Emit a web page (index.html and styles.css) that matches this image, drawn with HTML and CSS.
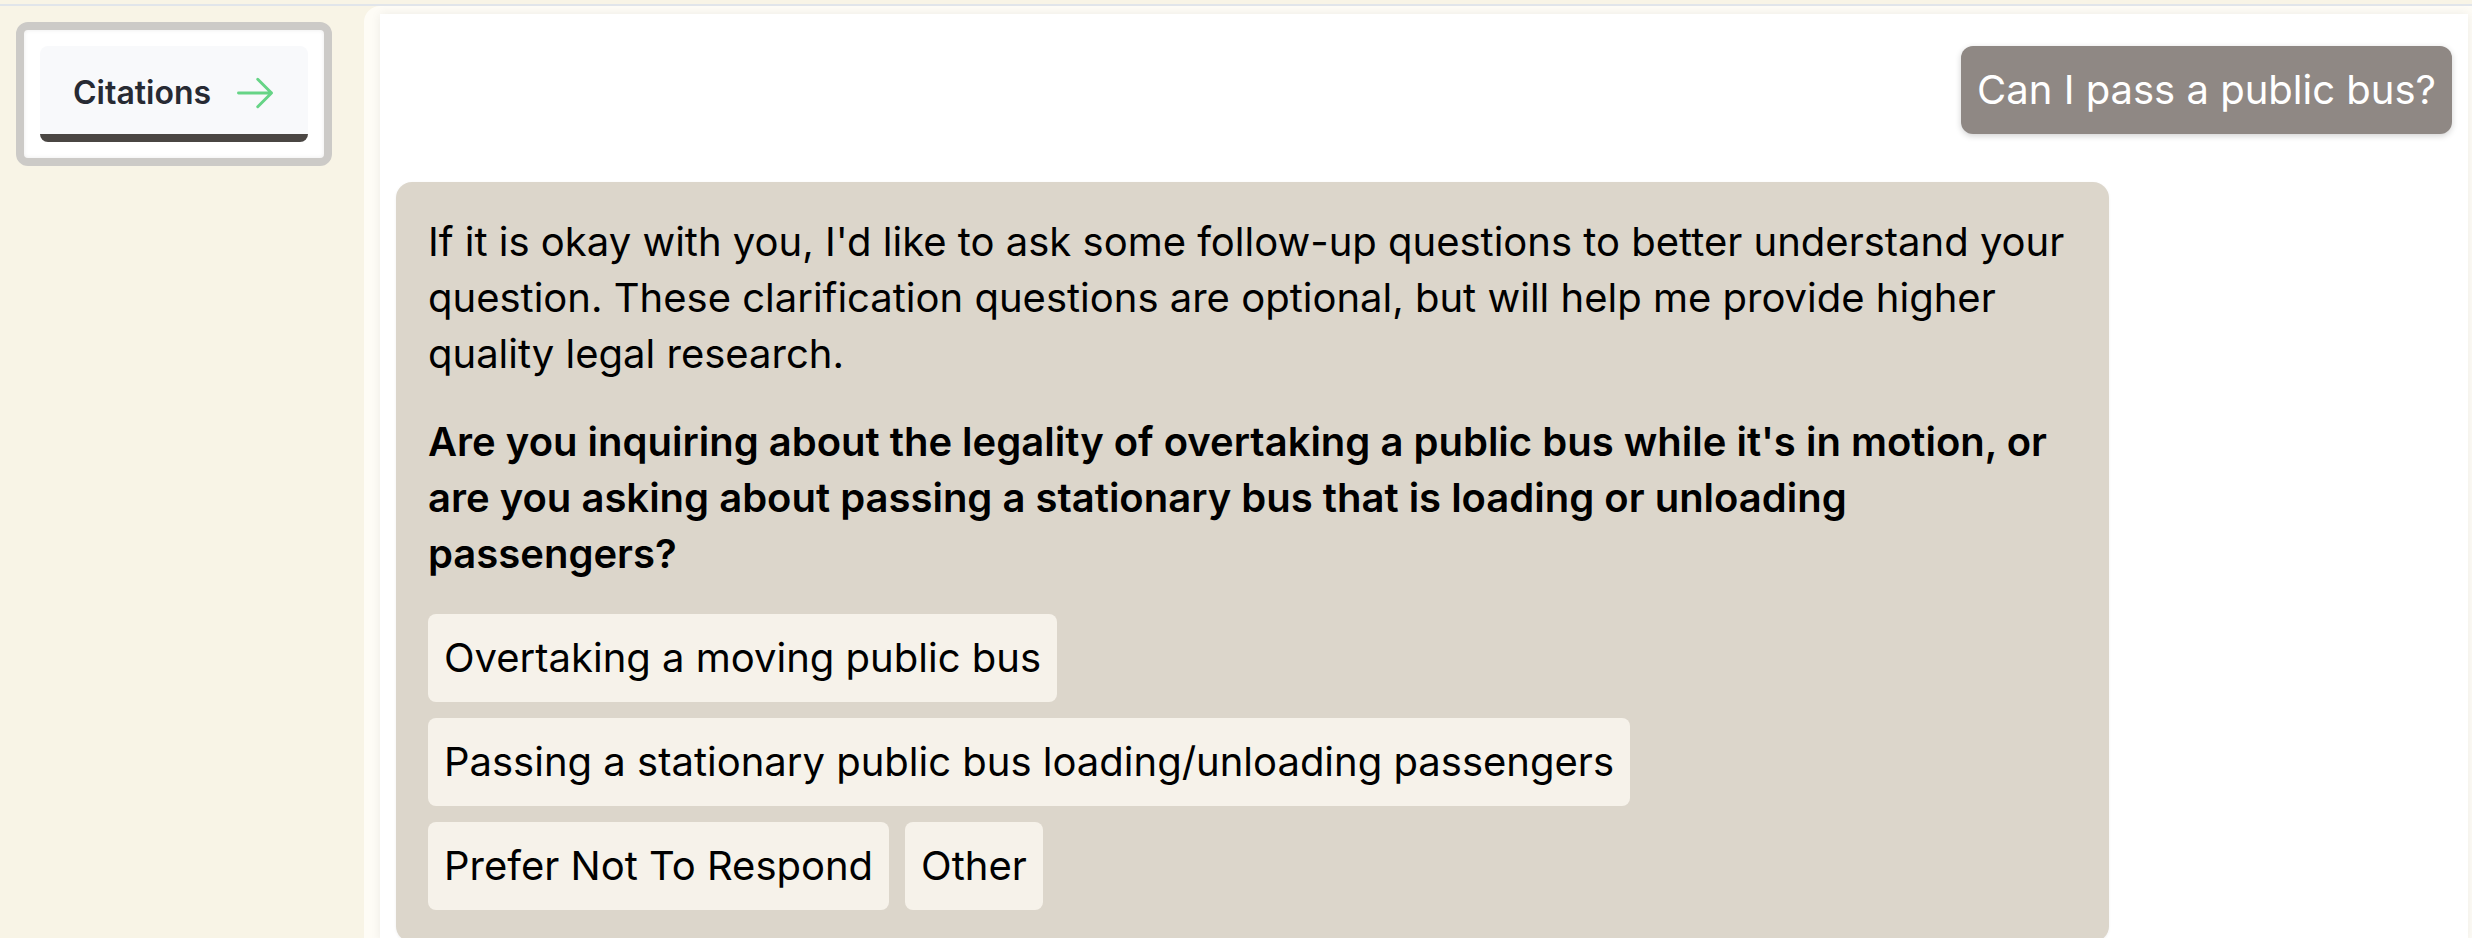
FILE: index.html
```html
<!DOCTYPE html>
<html lang="en">
<head>
<meta charset="utf-8">
<title>Chat</title>
<link rel="stylesheet" href="styles.css">
</head>
<body>
  <div class="topbar"></div>
  <div class="layout">
    <aside class="sidebar">
      <div class="cite-card">
        <button class="cite-btn" type="button">
          <span>Citations</span>
          <svg class="cite-arrow" viewBox="0 0 24 24" fill="none" stroke="currentColor" stroke-width="1.6" stroke-linecap="round" stroke-linejoin="round" aria-hidden="true">
            <path d="M13.5 4.5L21 12m0 0l-7.5 7.5M21 12H3"/>
          </svg>
        </button>
      </div>
    </aside>
    <main class="content">
      <section class="panel">
        <div class="user-row">
          <div class="bubble-user">Can I pass a public bus?</div>
        </div>
        <div class="bubble-ai">
          <p class="intro">If it is okay with you, I'd like to ask some follow-up questions to better understand your question. These clarification questions are optional, but will help me provide higher quality legal research.</p>
          <p class="question">Are you inquiring about the legality of overtaking a public bus while it's in motion, or are you asking about passing a stationary bus that is loading or unloading passengers?</p>
          <div class="options">
            <button class="option" type="button">Overtaking a moving public bus</button>
            <button class="option" type="button">Passing a stationary public bus loading/unloading passengers</button>
            <button class="option" type="button">Prefer Not To Respond</button>
            <button class="option" type="button">Other</button>
          </div>
        </div>
      </section>
    </main>
  </div>
</body>
</html>
```

FILE: styles.css
```css
* {
  box-sizing: border-box;
}

html, body {
  margin: 0;
  padding: 0;
  height: 938px;
  overflow: hidden;
}

body {
  background: #f8f4e6;
  font-family: Inter, "Noto Sans", "Liberation Sans", sans-serif;
  color: #000;
}

.topbar {
  height: 6px;
  border-bottom: 2px solid #e1e5ea;
  background: #f8f4e6;
}

.layout {
  display: flex;
  height: 932px;
}

.sidebar {
  width: 364px;
  flex: none;
  padding: 16px;
}

.cite-card {
  display: inline-block;
  background: #ffffff;
  border: 8px solid #cccac7;
  border-radius: 12px;
  padding: 16px;
  box-shadow: inset 0 0 4px rgba(0, 0, 0, 0.08);
}

.cite-btn {
  display: flex;
  align-items: center;
  gap: 22px;
  height: 96px;
  padding: 5px 31px 0 33px;
  background: #f8f9fb;
  border: none;
  border-bottom: 8px solid #4a4643;
  border-radius: 8px;
  font-family: Inter, "Noto Sans", sans-serif;
  font-weight: 600;
  font-size: 32px;
  color: #272a33;
  cursor: pointer;
}

.cite-arrow {
  width: 44px;
  height: 44px;
  color: #66d486;
}

.content {
  flex: 1;
  background: #fefcf6;
  border-top-left-radius: 16px;
  padding: 8px 4px 0 16px;
  display: flex;
  flex-direction: column;
}

.panel {
  flex: 1;
  background: #ffffff;
  box-shadow: 0 0 10px rgba(0, 0, 0, 0.07);
  padding: 32px 16px 0 16px;
}

.user-row {
  display: flex;
  justify-content: flex-end;
}

.bubble-user {
  background: #8f8884;
  color: #ffffff;
  font-size: 40px;
  line-height: 56px;
  padding: 16px;
  border-radius: 12px;
  box-shadow: 0 2px 6px rgba(0, 0, 0, 0.18);
}

.bubble-ai {
  margin-top: 48px;
  max-width: 83.333%;
  background: #dcd6cb;
  border-radius: 16px;
  padding: 32px;
  font-size: 40px;
  line-height: 56px;
  box-shadow: 0 1px 3px rgba(0, 0, 0, 0.06);
}

.bubble-ai p {
  margin: 0 0 32px 0;
}

.question {
  font-weight: 600;
}

.options {
  display: flex;
  flex-wrap: wrap;
  gap: 16px;
}

.option {
  background: #f6f2ea;
  border: none;
  border-radius: 8px;
  padding: 16px;
  font-family: Inter, "Noto Sans", sans-serif;
  font-size: 40px;
  line-height: 56px;
  color: #000;
  cursor: pointer;
}
```
